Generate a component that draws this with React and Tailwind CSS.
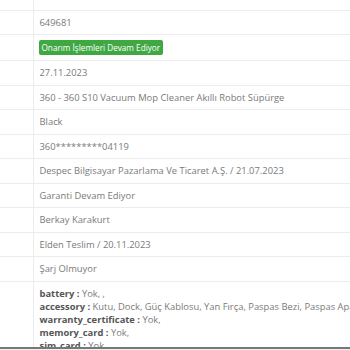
const rows = [
  '649681',
  'BADGE',
  '27.11.2023',
  '360 - 360 S10 Vacuum Mop Cleaner Akıllı Robot Süpürge',
  'Black',
  '360*********04119',
  'Despec Bilgisayar Pazarlama Ve Ticaret A.Ş. / 21.07.2023',
  'Garanti Devam Ediyor',
  'Berkay Karakurt',
  'Elden Teslim / 20.11.2023',
  'Şarj Olmuyor',
];

const extras = [
  ['battery', 'Yok, ,'],
  ['accessory', 'Kutu, Dock, Güç Kablosu, Yan Fırça, Paspas Bezi, Paspas Aparatı, Toz Haznesi'],
  ['warranty_certificate', 'Yok,'],
  ['memory_card', 'Yok,'],
  ['sim_card', 'Yok'],
];

export default function App() {
  return (
    <div className="h-[350px] w-[350px] overflow-hidden bg-white flex flex-col font-['Open_Sans',sans-serif] text-[9.4px] leading-[13.5px] text-[#7a7a7a]">
      <div className="flex-1 overflow-hidden">
        <table className="w-[600px] border-collapse -mt-[13px]">
          <tbody>
            <tr className="border-b border-[#ececec]">
              <td className="w-[33px] border-r border-[#ececec] h-[23px]"></td>
              <td className="px-[6px]"></td>
            </tr>
            {rows.map((r, i) => (
              <tr key={i} className="border-b border-[#ececec]">
                <td className="w-[33px] border-r border-[#ececec]"></td>
                <td className="px-[6px] py-[5px] whitespace-nowrap">
                  {r === 'BADGE' ? (
                    <span className="inline-block -ml-[1px] rounded-[2px] bg-[#3fa843] text-white text-[8.2px] leading-[15px] px-[3px] align-middle">
                      Onarım İşlemleri Devam Ediyor
                    </span>
                  ) : (
                    r
                  )}
                </td>
              </tr>
            ))}
            <tr>
              <td className="w-[33px] border-r border-[#ececec]"></td>
              <td className="px-[6px] pt-[5px] pb-[6px] whitespace-nowrap leading-[13.2px]">
                {extras.map(([k, v]) => (
                  <div key={k}>
                    <b className="font-bold text-[#555]">{k} : </b>
                    {v}
                  </div>
                ))}
              </td>
            </tr>
          </tbody>
        </table>
      </div>
      <div className="h-[3px] bg-[#f0f0f0] border-t-2 border-[#777]"></div>
    </div>
  );
}
